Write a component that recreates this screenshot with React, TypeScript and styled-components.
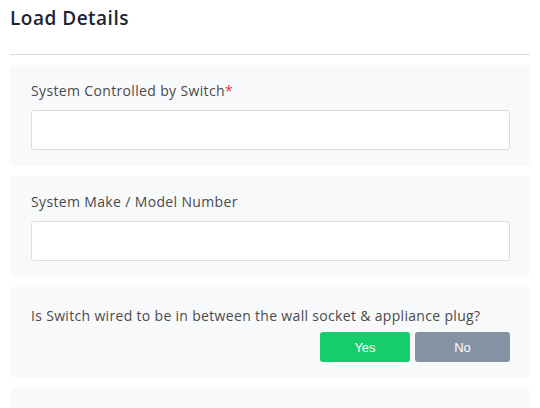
import { useState } from "react";
import styled, { createGlobalStyle } from "styled-components";

const Global = createGlobalStyle`
  body {
    margin: 0;
    background: #fff;
    font-family: "Open Sans", "Noto Sans", sans-serif;
  }
`;

const Page = styled.div`
  padding: 0 10px;
`;

const Title = styled.h2`
  margin: 0;
  padding-top: 5px;
  height: 55px;
  box-sizing: border-box;
  font-size: 19px;
  font-weight: 600;
  letter-spacing: 0.5px;
  color: #1c2434;
  line-height: 26px;
  border-bottom: 1px solid #dcdcdc;
`;

const List = styled.div`
  display: flex;
  flex-direction: column;
  gap: 10px;
  padding-top: 10px;
`;

const Card = styled.div<{ $top?: number }>`
  background: #f8f9fb;
  border-radius: 5px;
  padding: ${(p) => p.$top ?? 16}px 20px 16px 21px;
`;

const Label = styled.div`
  font-size: 14px;
  line-height: 20px;
  letter-spacing: 0.35px;
  color: #4a4a4a;
  margin-bottom: 9px;
`;

const Req = styled.span`
  color: #ef3340;
`;

const Input = styled.input`
  display: block;
  width: 100%;
  height: 40px;
  box-sizing: border-box;
  border: 1px solid #d8dde4;
  border-radius: 3px;
  background: #fff;
  outline: none;
`;

const Question = styled.div`
  font-size: 14px;
  line-height: 20px;
  letter-spacing: 0.32px;
  color: #4a4a4a;
  margin-bottom: 6px;
`;

const Buttons = styled.div`
  display: flex;
  justify-content: flex-end;
  gap: 5px;
`;

const Choice = styled.button<{ $tone: "yes" | "no"; $w: number }>`
  width: ${(p) => p.$w}px;
  height: 30px;
  border: none;
  border-radius: 3px;
  font-family: "Liberation Sans", Arial, sans-serif;
  font-size: 13px;
  font-weight: 500;
  color: #fff;
  cursor: pointer;
  background: ${(p) => (p.$tone === "yes" ? "#15cd6a" : "#8592a3")};
`;

const Stub = styled(Card)`
  height: 40px;
`;

export default function App() {
  const [answer, setAnswer] = useState<string | null>(null);
  return (
    <Page>
      <Global />
      <Title>Load Details</Title>
      <List>
        <Card>
          <Label>
            System Controlled by Switch<Req>*</Req>
          </Label>
          <Input />
        </Card>
        <Card>
          <Label>System Make / Model Number</Label>
          <Input />
        </Card>
        <Card $top={19}>
          <Question>Is Switch wired to be in between the wall socket &amp; appliance plug?</Question>
          <Buttons>
            <Choice $tone="yes" $w={90} onClick={() => setAnswer("yes")} data-active={answer === "yes"}>
              Yes
            </Choice>
            <Choice $tone="no" $w={95} onClick={() => setAnswer("no")} data-active={answer === "no"}>
              No
            </Choice>
          </Buttons>
        </Card>
        <Stub />
      </List>
    </Page>
  );
}
